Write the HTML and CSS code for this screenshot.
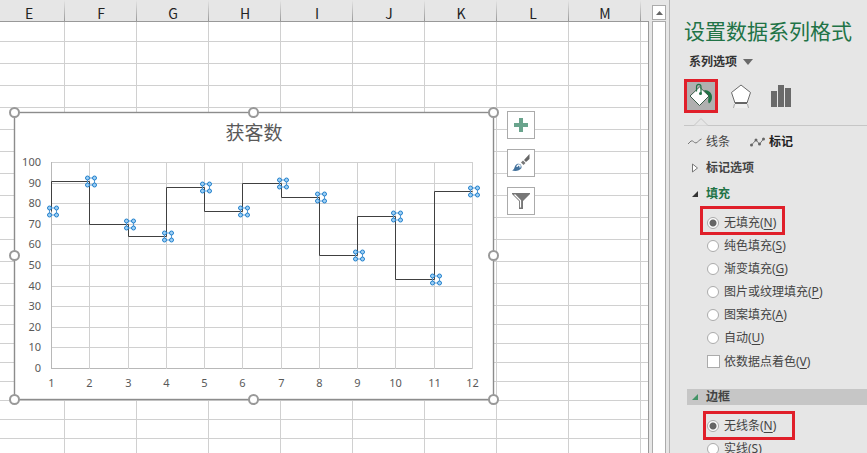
FILE: index.html
```html
<!DOCTYPE html>
<html lang="zh-CN">
<head>
  <meta charset="UTF-8">
  <meta name="viewport" content="width=device-width, initial-scale=1.0">
  <title>设置数据系列格式</title>
  <link rel="stylesheet" href="styles.css">
</head>
<body>
  <main class="sheet">
    <table class="grid">
      <thead>
        <tr><th>E</th><th>F</th><th>G</th><th>H</th><th>I</th><th>J</th><th>K</th><th>L</th><th>M</th><th></th></tr>
      </thead>
      <tbody id="rows"></tbody>
    </table>

    <div class="chart-object">
      <svg id="chart" class="chart" width="492" height="300"></svg>
      <div class="chart-tools">
        <button class="tool" aria-label="图表元素">
          <svg width="14" height="14"><path d="M5 0h4v5h5v4H9v5H5V9H0V5h5z" fill="#6aa48d"/></svg>
        </button>
        <button class="tool" aria-label="图表样式">
          <svg width="20" height="20" viewBox="0 0 20 20">
            <path d="M18.500 1v5l-3.500 3-2-2z" fill="#666"/>
            <path d="M12 7.500l2.500 2.500-2 2-2.500-2.500z" fill="#777"/>
            <path d="M1 17.500c3-1 2-5 5-6.500 3-1 5 1 4.500 4-2 3-6 3.500-9.500 2.500z" fill="#41719c"/>
            <path d="M6 14c0-2 2-2.500 3-1.500v2" stroke="#fff" stroke-width="1.300" fill="none"/>
          </svg>
        </button>
        <button class="tool" aria-label="图表筛选器">
          <svg width="20" height="20" viewBox="0 0 20 20">
            <path d="M1 2h18v1l-7 7v8H8v-8L1 3z" fill="#777"/>
            <path d="M3.500 3.500L9.500 9.500v7" stroke="#fff" stroke-width="1.200" fill="none"/>
          </svg>
        </button>
      </div>
    </div>
  </main>

  <div class="scrollbar">
    <button class="scroll-up" aria-label="向上滚动"><svg width="7" height="4"><path d="M3.500 0L7 4H0z" fill="#666"/></svg></button>
    <div class="scroll-thumb"></div>
  </div>

  <aside class="panel">
    <h1>设置数据系列格式</h1>
    <button class="series-options">系列选项
      <svg width="10" height="6"><path d="M0 0h10L5 6z" fill="#6a6a6a"/></svg>
    </button>

    <div class="categories">
      <button class="category active" aria-label="填充与线条">
        <svg width="28" height="28" viewBox="0 0 28 28">
          <path d="M17 8c5 0 8 3 8 7 0 3-1 5-3 6.500-1-1-1-3-.5-6z" fill="#217346"/>
          <path d="M12.500 5L22 14l-9.500 9.500L3 14z" fill="#fff" stroke="#3c5c4a" stroke-width="1"/>
          <path d="M9.500 9.500V5c0-3.500 4.500-3.500 4.500 0v6" fill="none" stroke="#217346" stroke-width="1.200"/>
          <circle cx="13.500" cy="11.500" r="1.500" fill="#217346"/>
        </svg>
      </button>
      <button class="category" aria-label="效果">
        <svg width="24" height="26" viewBox="0 0 24 26">
          <path d="M6 21h12l1 4H5z" fill="#efefef"/>
          <path d="M12 2l9.500 7.500L18 20H6L2.500 9.500z" fill="#fff" stroke="#6a6a6a" stroke-width="1"/>
          <path d="M6 20h12" stroke="#666" stroke-width="2"/>
          <path d="M5.500 21l-1 4M18.500 21l1 4" stroke="#aaa"/>
        </svg>
      </button>
      <button class="category" aria-label="系列选项">
        <svg width="20" height="22"><path d="M0 6h6v16H0zM7 0h6v22H7zM14 3h6v19h-6z" fill="#6a6a6a"/></svg>
      </button>
    </div>
    <div class="divider"><svg width="16" height="8"><path d="M0 7.500h1L8 .5l7 7h1" fill="#e6e6e6" stroke="#c6c6c6"/></svg></div>

    <div class="tabs">
      <button class="tab">
        <svg width="14" height="8"><path d="M0 6l3-3c2-1 3 2 5 2 2-1 3-3 5.500-4" fill="none" stroke="#777"/></svg>
        线条
      </button>
      <button class="tab active">
        <svg width="15" height="10"><path d="M1.500 8L6 3l3.500 4 4-5" fill="none" stroke="#777"/><g fill="#666"><circle cx="1.500" cy="8" r="1.500"/><circle cx="6" cy="3" r="1.500"/><circle cx="9.500" cy="7" r="1.500"/><circle cx="13.500" cy="2" r="1.500"/></g></svg>
        标记
      </button>
    </div>

    <button class="section">
      <svg width="6" height="10"><path d="M.5 1v8l5-4z" fill="#fff" stroke="#777"/></svg>
      标记选项
    </button>
    <button class="section open">
      <svg width="6" height="6"><path d="M6 0v6H0z" fill="#333"/></svg>
      填充
    </button>
    <div class="options">
      <label class="option highlight"><input type="radio" name="fill" checked><span>无填充(<u>N</u>)</span></label>
      <label class="option"><input type="radio" name="fill"><span>纯色填充(<u>S</u>)</span></label>
      <label class="option"><input type="radio" name="fill"><span>渐变填充(<u>G</u>)</span></label>
      <label class="option"><input type="radio" name="fill"><span>图片或纹理填充(<u>P</u>)</span></label>
      <label class="option"><input type="radio" name="fill"><span>图案填充(<u>A</u>)</span></label>
      <label class="option"><input type="radio" name="fill"><span>自动(<u>U</u>)</span></label>
      <label class="option check"><input type="checkbox"><span>依数据点着色(<u>V</u>)</span></label>
    </div>

    <button class="section selected">
      <svg width="6" height="6"><path d="M6 0v6H0z" fill="#439467"/></svg>
      边框
    </button>
    <div class="options">
      <label class="option highlight wide"><input type="radio" name="border" checked><span>无线条(<u>N</u>)</span></label>
      <label class="option"><input type="radio" name="border"><span>实线(<u>S</u>)</span></label>
    </div>
  </aside>

  <script src="script.js"></script>
</body>
</html>
```
FILE: styles.css
```css
*,
*::before,
*::after {
  box-sizing: border-box;
}
body {
  margin: 0;
  display: flex;
  height: 100vh;
  overflow: hidden;
  background: #e6e6e6;
  color: #444;
  font-family: "Noto Sans", "Noto Sans CJK SC", sans-serif;
  font-size: 12px;
  line-height: 18px;
}
button {
  padding: 0;
  border: none;
  background: none;
  color: inherit;
  font: inherit;
  cursor: pointer;
}
svg {
  display: block;
  flex: none;
}

/* worksheet */
.sheet {
  position: relative;
  flex: 1;
  min-width: 0;
  overflow: hidden;
}
.sheet::after {
  content: "";
  position: absolute;
  top: 21px;
  right: 0;
  bottom: 0;
  border-right: 1px solid #999;
}
.grid {
  width: 720px;
  margin-left: -7px;
  table-layout: fixed;
  border-collapse: separate;
  border-spacing: 0;
}
.grid th {
  height: 22px;
  padding: 5px 0 0;
  border-bottom: 1px solid #999;
  background: linear-gradient(#e6e6e6, #999) right / 1px 100% no-repeat #e6e6e6;
  color: #222;
  font-family: "Noto Sans CJK SC", sans-serif;
  font-size: 14px;
  font-weight: 400;
  line-height: 16px;
}
.grid td {
  height: 19px;
  padding: 0;
  border-right: 1px solid #d0d0d0;
  border-bottom: 1px solid #d0d0d0;
  background: #fff;
}
.grid .tall td {
  height: 22px;
}
.grid .first td {
  height: 20px;
}

/* chart floating over the cells */
.chart-object {
  position: absolute;
  top: 106px;
  left: 8px;
  display: flex;
  gap: 7px;
}
.chart-tools {
  display: flex;
  flex-direction: column;
  gap: 10px;
  padding-top: 5px;
}
.tool {
  display: flex;
  align-items: center;
  justify-content: center;
  width: 28px;
  height: 28px;
  border: 1px solid #ababab;
  background: #fff;
}
.frame {
  fill: #fff;
  stroke: #8c8c8c;
  stroke-width: 1.4;
}
.handle {
  fill: #fff;
  stroke: #999;
  stroke-width: 2;
}
.gridline {
  stroke: #d0d0d0;
}
.axis {
  stroke: #b8b8b8;
}
.step {
  fill: none;
  stroke: #404040;
}
.marker rect {
  fill: none;
  stroke: #5b9bd5;
}
.marker circle {
  fill: #9fd0f5;
  stroke: #2080cc;
}
.chart text {
  fill: #595959;
  font-size: 11px;
  text-anchor: middle;
}
.chart .y-label {
  text-anchor: end;
}
.chart .chart-title {
  font-size: 19px;
}

/* vertical scrollbar */
.scrollbar {
  display: flex;
  flex-direction: column;
  gap: 1px;
  width: 21px;
  padding: 5px 3px 0;
  border-right: 1px solid #b4b4b4;
}
.scroll-up {
  display: flex;
  align-items: center;
  justify-content: center;
  height: 15px;
  border: 1px solid #ababab;
  background: #fff;
}
.scroll-thumb {
  flex: 1;
  border: 1px solid #ababab;
  border-bottom: none;
  background: #fff;
}

/* format panel */
.panel {
  display: flex;
  flex-direction: column;
  width: 197px;
  height: 100vh;
  padding: 17px 0 0 14px;
  overflow: hidden;
}
.panel > * {
  flex: none;
}
.panel h1 {
  margin: 0;
  color: #217346;
  font-size: 21px;
  font-weight: 400;
  line-height: 28px;
}
.series-options {
  display: flex;
  align-items: center;
  gap: 6px;
  margin: 8px 0 0 5px;
  color: #333;
  font-weight: 700;
}
.categories {
  display: flex;
  gap: 6px;
  margin-top: 8px;
}
.category {
  display: flex;
  align-items: center;
  justify-content: center;
  width: 34px;
  height: 34px;
}
.category.active {
  border: 3px solid #e01f2a;
  background: #b0b0b0;
}
.divider {
  height: 8px;
  margin-top: 5px;
  padding-left: 9px;
  background: linear-gradient(#c6c6c6, #c6c6c6) bottom / 100% 1px no-repeat;
}
.tabs {
  display: flex;
  gap: 20px;
  margin: 7px 0 0 4px;
}
.tab {
  display: flex;
  align-items: center;
  gap: 4px;
}
.tab.active {
  color: #222;
  font-weight: 700;
}
.section {
  display: flex;
  align-items: center;
  gap: 8px;
  margin: 8px 0 0 3px;
  padding-left: 5px;
  font-weight: 700;
}
.section.open {
  color: #217346;
}
.section.selected {
  height: 16px;
  margin-top: 15px;
  background: #c6c6c6;
}
.options {
  margin: 8px 0 0 23px;
}
.selected + .options {
  margin-top: 9px;
}
.option {
  position: relative;
  display: flex;
  align-items: center;
  gap: 5px;
  height: 23px;
}
.option.check {
  height: 25px;
}
.option input {
  appearance: none;
  width: 12px;
  height: 12px;
  margin: 0;
  border: 1px solid #ababab;
  background: #fff;
}
.option input[type="radio"] {
  border-radius: 50%;
}
.option input[type="radio"]:checked {
  background: radial-gradient(circle, #666 3px, #fff 4px);
}
.option input[type="checkbox"] {
  width: 13px;
  height: 13px;
  margin-right: -1px;
}
.option u {
  text-underline-offset: 2px;
}
.highlight::before {
  content: "";
  position: absolute;
  top: -5px;
  left: -7px;
  width: 85px;
  height: 29px;
  border: 3px solid #e01f2a;
}
.highlight.wide::before {
  top: -3px;
  left: -4px;
  width: 92px;
}
```
FILE: script.js
```js
// worksheet rows
const rowsBody = document.getElementById('rows');
for (let i = 0; i < 60; i++) {
  const row = rowsBody.insertRow();
  if (i === 0) {
    row.className = 'first';
  } else if (i < 13) {
    row.className = 'tall';
  }
  for (let c = 0; c < 10; c++) {
    row.insertCell();
  }
}

// step chart
const values = [76, 91, 70, 64, 88, 76, 90, 83, 55, 74, 43, 86];
const plot = { left: 43, right: 464, top: 56, bottom: 262 };
const chart = document.getElementById('chart');

function add(parent, name, attrs, text) {
  const el = document.createElementNS('http://www.w3.org/2000/svg', name);
  for (const key in attrs) {
    el.setAttribute(key, attrs[key]);
  }
  if (text !== undefined) {
    el.textContent = text;
  }
  parent.appendChild(el);
  return el;
}

function xAt(i) {
  return Math.round(plot.left + i * (plot.right - plot.left) / (values.length - 1)) + 0.5;
}

function yAt(value) {
  return Math.round(plot.bottom - value * (plot.bottom - plot.top) / 100) + 0.5;
}

add(chart, 'rect', { class: 'frame', x: 6.5, y: 6.5, width: 479, height: 287 });
add(chart, 'text', { class: 'chart-title', x: 246, y: 34 }, '获客数');

for (let v = 0; v <= 100; v += 10) {
  add(chart, 'line', { class: v ? 'gridline' : 'axis', x1: plot.left, x2: plot.right + 1, y1: yAt(v), y2: yAt(v) });
  add(chart, 'text', { class: 'y-label', x: 33, y: yAt(v) + 3.5 }, v);
}
values.forEach((v, i) => {
  add(chart, 'line', { class: i ? 'gridline' : 'axis', x1: xAt(i), x2: xAt(i), y1: plot.top, y2: plot.bottom + 1 });
  add(chart, 'text', { x: xAt(i), y: 281 }, i + 1);
});

let path = `M${xAt(0)} ${yAt(values[0])}`;
for (let i = 1; i < values.length; i++) {
  path += `V${yAt(values[i])}H${xAt(i)}`;
}
add(chart, 'path', { class: 'step', d: path });

values.forEach((v, i) => {
  const marker = add(chart, 'g', { class: 'marker', transform: `translate(${xAt(i) + 1.5} ${yAt(v)})` });
  add(marker, 'rect', { x: -3.5, y: -3.5, width: 7, height: 7 });
  [[-3.5, -3.5], [3.5, -3.5], [-3.5, 3.5], [3.5, 3.5]].forEach(([cx, cy]) => {
    add(marker, 'circle', { cx, cy, r: 2 });
  });
});

// selection handles
[6.5, 245.5, 485.5].forEach((x) => {
  [6.5, 149.5, 293.5].forEach((y) => {
    if (x !== 245.5 || y !== 149.5) {
      add(chart, 'circle', { class: 'handle', cx: x, cy: y, r: 4.5 });
    }
  });
});
```
